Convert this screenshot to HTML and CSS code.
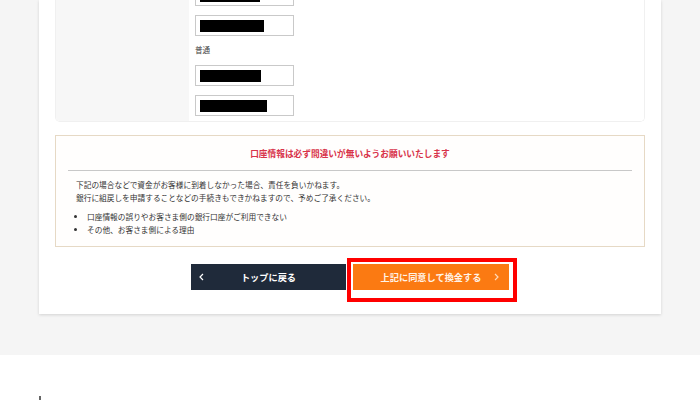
FILE: index.html
```html
<!DOCTYPE html>
<html lang="ja">
<head>
<meta charset="utf-8">
<title>換金確認</title>
<link rel="stylesheet" href="styles.css">
</head>
<body>
<div class="band">
  <div class="card">
    <div class="info-table">
      <div class="info-label"></div>
      <div class="info-value">
        <div class="field field-first"><span class="mask" style="width:60px"></span></div>
        <div class="field"><span class="mask" style="width:64px"></span></div>
        <div class="field-text">普通</div>
        <div class="field"><span class="mask" style="width:61px"></span></div>
        <div class="field"><span class="mask" style="width:67px"></span></div>
      </div>
    </div>

    <div class="notice">
      <h2 class="notice-title">口座情報は必ず間違いが無いようお願いいたします</h2>
      <div class="notice-rule"></div>
      <p class="notice-text">下記の場合などで資金がお客様に到着しなかった場合、責任を負いかねます。<br>銀行に組戻しを申請することなどの手続きもできかねますので、予めご了承ください。</p>
      <ul class="notice-list">
        <li>口座情報の誤りやお客さま側の銀行口座がご利用できない</li>
        <li>その他、お客さま側による理由</li>
      </ul>
    </div>

    <div class="actions">
      <a class="btn btn-back" href="#">
        <svg class="chev chev-left" width="5" height="8" viewBox="0 0 5 8"><polyline points="4,1 1,4 4,7" fill="none" stroke="#fff" stroke-width="1.2"/></svg>
        <span>トップに戻る</span>
      </a>
      <div class="btn-wrap">
        <a class="btn btn-go" href="#">
          <span>上記に同意して換金する</span>
          <svg class="chev chev-right" width="5" height="8" viewBox="0 0 5 8"><polyline points="1,1 4,4 1,7" fill="none" stroke="#ffd9b8" stroke-width="1.2"/></svg>
        </a>
        <div class="highlight"></div>
      </div>
    </div>
  </div>
</div>
<div class="next">
  <div class="next-mark"></div>
</div>
</body>
</html>
```

FILE: styles.css
```css
html, body {
  margin: 0;
  padding: 0;
  background: #ffffff;
  font-family: "Noto Sans CJK JP", "Noto Sans", sans-serif;
  color: #333333;
}

.band {
  background: #f5f5f5;
  height: 355px;
  padding: 0 39px;
  box-sizing: border-box;
}

.card {
  background: #ffffff;
  height: 314px;
  box-sizing: border-box;
  padding: 0 16px 24px;
  box-shadow: 0 1px 3px rgba(0, 0, 0, 0.14);
}

.info-table {
  display: grid;
  grid-template-columns: 133px 1fr;
  height: 122px;
  box-sizing: border-box;
  border: 1px solid #f0f0f0;
  border-top: none;
  border-radius: 0 0 5px 5px;
  overflow: hidden;
}

.info-label {
  background: #f7f7f7;
}

.info-value {
  background: #ffffff;
  padding-left: 6px;
  display: flex;
  flex-direction: column;
  align-items: flex-start;
}

.field {
  width: 99px;
  height: 21px;
  box-sizing: border-box;
  border: 1px solid #c9c9c9;
  background: #fff;
  margin-top: 9px;
  padding: 4px 0 0 4px;
}

.field-first {
  margin-top: -15px;
}

.mask {
  display: block;
  height: 12px;
  background: #000;
}

.field-text {
  font-size: 7.6px;
  line-height: 12px;
  height: 12px;
  margin-top: 8px;
  color: #444;
}

.field-text + .field {
  margin-top: 9px;
}

.notice {
  margin-top: 13px;
  height: 112px;
  box-sizing: border-box;
  border: 1px solid #e6d9c5;
  background: #fffefd;
  padding: 11px 12px 0;
}

.notice-title {
  margin: 0;
  text-align: center;
  font-size: 8.7px;
  line-height: 14px;
  font-weight: 700;
  color: #d8334a;
}

.notice-rule {
  margin-top: 9px;
  height: 1px;
  background: #c8c8c8;
}

.notice-text {
  margin: 7px 0 0 8px;
  font-size: 7.7px;
  line-height: 13px;
  color: #333;
}

.notice-list {
  margin: 6px 0 0 8px;
  padding: 0 0 0 11px;
  font-size: 7.7px;
  line-height: 13px;
  color: #333;
}

.notice-list li {
  list-style: disc;
}

.actions {
  margin-top: 17px;
  display: flex;
  justify-content: center;
  gap: 7px;
}

.btn {
  height: 26px;
  display: flex;
  align-items: center;
  justify-content: center;
  position: relative;
  font-size: 9.2px;
  font-weight: 700;
  color: #ffffff;
  text-decoration: none;
  box-sizing: border-box;
}

.btn-back {
  width: 155px;
  background: #1f2a3a;
}

.btn-wrap {
  position: relative;
}

.btn-go {
  width: 156px;
  background: #fb7a12;
  color: #fff3e8;
}

.chev {
  position: absolute;
  top: 9px;
}

.chev-left {
  left: 8px;
}

.chev-right {
  right: 10px;
}

.highlight {
  position: absolute;
  left: -6px;
  top: -6px;
  right: -8px;
  bottom: -12px;
  border: 4px solid #ff0000;
  pointer-events: none;
}

.next {
  padding: 41px 39px 0;
}

.next-mark {
  width: 2px;
  height: 10px;
  background: #666;
}
```
